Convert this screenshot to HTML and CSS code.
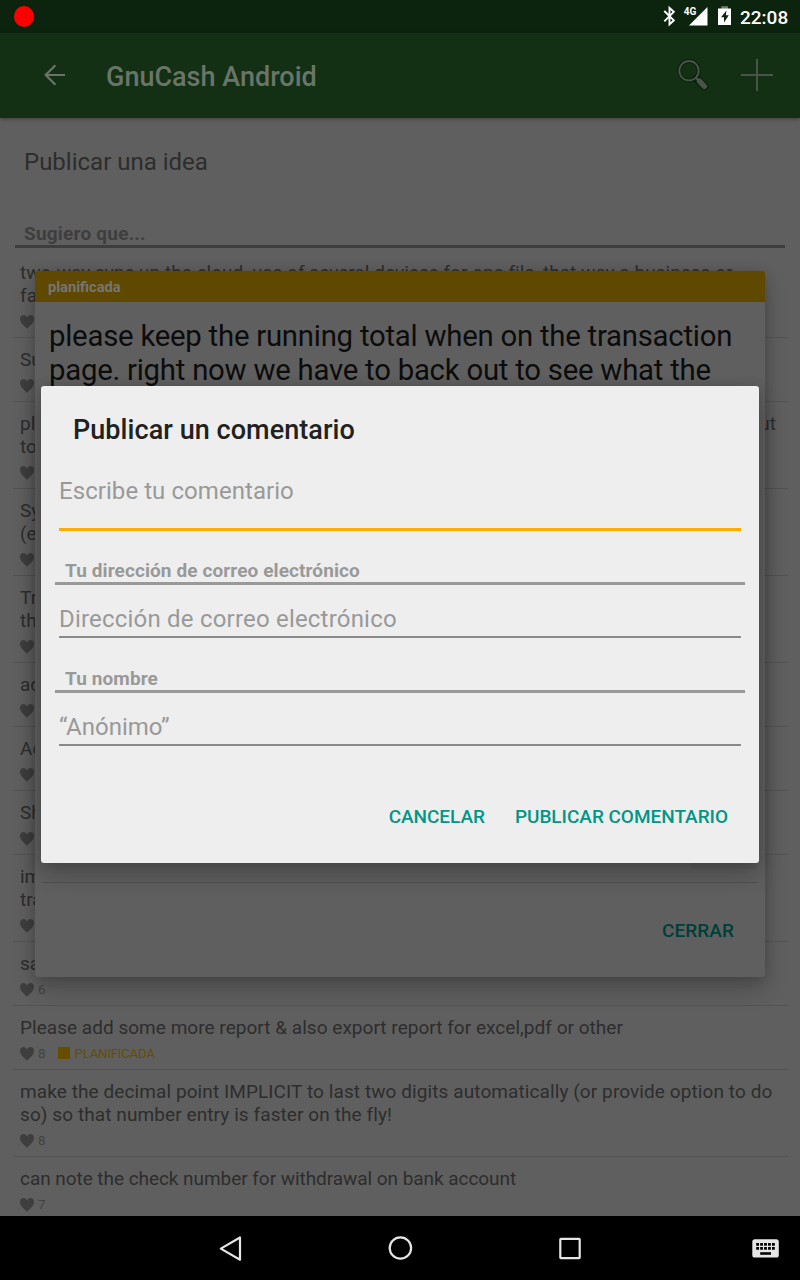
FILE: index.html
```html
<!DOCTYPE html>
<html lang="es">
<head>
<meta charset="utf-8">
<title>GnuCash Android</title>
<link rel="stylesheet" href="styles.css">
</head>
<body>
<svg class="defs" width="0" height="0"><symbol id="heart" viewBox="0 0 14 14"><path d="M7 13.7C4 11 0 7.800 0 4.100C0 1.700 1.500 .1 3.500 .1C5 .1 6.400 1.300 7 2.700C7.600 1.300 9 .1 10.500 .1C12.500 .1 14 1.700 14 4.100C14 7.800 10 11 7 13.700Z"/></symbol></svg>
<div class="screen">
  <header class="status">
    <span class="rec"></span>
    <svg class="status-icons" width="70" height="33" viewBox="662 0 70 33">
      <path d="M664.300 11L673.800 20.400L669.500 24.400V8L673.800 11.900L664.300 21.400" fill="none" stroke="#fff" stroke-width="1.900"/>
      <path d="M707.500 7V25.500H689Z" fill="#fff"/>
      <path d="M721.200 6.200H728V9H721.200Z" fill="#6d7c6e"/>
      <path d="M718 8.500H731V25H718Z" fill="#fff"/>
      <path d="M726.500 10.500L721 17.300H724V22.500L728.800 15.300H725.800Z" fill="#0c240e"/>
      <text x="683.800" y="15.300" class="net">4G</text>
    </svg>
    <span class="clock">22:08</span>
  </header>
  <div class="appbar">
    <svg class="back" width="24" height="24" viewBox="0 0 24 24"><path d="M22 12H3M12.400 2.300L2.700 12L12.400 21.700" fill="none" stroke="#6a756a" stroke-width="2.200"/></svg>
    <h1 class="app-title">GnuCash Android</h1>
    <svg class="search" width="32" height="32" viewBox="0 0 32 32"><path d="M19.300 19.300L27.200 27.200" stroke="#0a200c" stroke-width="8" stroke-linecap="round"/><circle cx="12" cy="11.700" r="9.700" fill="none" stroke="#0a200c" stroke-width="4"/><circle cx="12" cy="11.700" r="9.700" fill="none" stroke="#475548" stroke-width="1.900"/><path d="M18.500 18.300L22 22" stroke="#475548" stroke-width="2.400"/><path d="M22.500 22.200L27.300 27.300" stroke="#475548" stroke-width="5.400" stroke-linecap="round"/></svg>
    <svg class="plus" width="32" height="32" viewBox="0 0 32 32"><path d="M16 0V32M0 16H32" stroke="#475548" stroke-width="2"/></svg>
  </div>
  <main class="content">
    <div class="idea">Publicar una idea</div>
    <div class="section">Sugiero que...</div>
    <ul class="list">
      <li class="item"><p class="roomy">two-way sync up the cloud, use of several devices for one file, that way a business or<br>fa</p><div class="meta"><svg class="heart"><use href="#heart"/></svg></div></li>
      <li class="item"><p>Su</p><div class="meta"><svg class="heart"><use href="#heart"/></svg></div></li>
      <li class="item"><p class="split"><span>pl<br>to</span><span>but</span></p><div class="meta"><svg class="heart"><use href="#heart"/></svg></div></li>
      <li class="item"><p>Sy<br>(e</p><div class="meta"><svg class="heart"><use href="#heart"/></svg></div></li>
      <li class="item"><p>Tr<br>th</p><div class="meta"><svg class="heart"><use href="#heart"/></svg></div></li>
      <li class="item"><p>ad</p><div class="meta"><svg class="heart"><use href="#heart"/></svg></div></li>
      <li class="item"><p>Ad</p><div class="meta"><svg class="heart"><use href="#heart"/></svg></div></li>
      <li class="item"><p>Sh</p><div class="meta"><svg class="heart"><use href="#heart"/></svg></div></li>
      <li class="item"><p>im<br>tra</p><div class="meta"><svg class="heart"><use href="#heart"/></svg></div></li>
      <li class="item"><p>sa</p><div class="meta"><svg class="heart"><use href="#heart"/></svg><span>6</span></div></li>
      <li class="item"><p class="roomy">Please add some more report &amp; also export report for excel,pdf or other</p><div class="meta"><svg class="heart"><use href="#heart"/></svg><span>8</span><i class="swatch"></i><span class="tag">PLANIFICADA</span></div></li>
      <li class="item"><p class="roomier">make the decimal point IMPLICIT to last two digits automatically (or provide option to do<br>so) so that number entry is faster on the fly!</p><div class="meta"><svg class="heart"><use href="#heart"/></svg><span>8</span></div></li>
      <li class="item"><p class="tight">can note the check number for withdrawal on bank account</p><div class="meta"><svg class="heart"><use href="#heart"/></svg><span>7</span></div></li>
    </ul>
  </main>
  <nav class="nav">
    <svg width="800" height="64" viewBox="0 0 800 64" fill="none" stroke="#e6e6e6" stroke-width="2.200">
      <path d="M240 21.500V43.700L220.800 32.600Z" stroke-linejoin="round"/>
      <circle cx="400.400" cy="32" r="10.700"/>
      <rect x="560.300" y="22.800" width="19.400" height="19.400" rx=".6"/>
      <rect x="752.300" y="23.300" width="26.500" height="18.300" rx="2.600" fill="#e6e6e6" stroke="none"/>
      <path d="M756.200 28.400H775.200M756.200 32.400H775.200" stroke="#000" stroke-width="2.600" stroke-dasharray="2.800 1.150"/>
      <path d="M760.200 37.500H771" stroke="#000" stroke-width="2.600"/>
    </svg>
  </nav>

  <section class="detail">
    <div class="detail-status">planificada</div>
    <div class="detail-text">please keep the running total when on the transaction<br>page. right now we have to back out to see what the</div>
    <div class="button-edge"></div>
    <div class="detail-foot"><span class="cerrar">CERRAR</span></div>
  </section>

  <section class="dialog">
    <h2 class="dialog-title">Publicar un comentario</h2>
    <div class="field comment">Escribe tu comentario</div>
    <div class="label">Tu dirección de correo electrónico</div>
    <div class="field mail">Dirección de correo electrónico</div>
    <div class="label second">Tu nombre</div>
    <div class="field name">“Anónimo”</div>
    <div class="actions"><span class="cancel">CANCELAR</span><span class="publish">PUBLICAR COMENTARIO</span></div>
  </section>
</div>
</body>
</html>
```

FILE: styles.css
```css
* { box-sizing: border-box; margin: 0; padding: 0; }
body { font-family: Roboto, sans-serif; background: #5f5f5f; }
.defs { position: absolute; }
.screen {
  position: relative;
  width: 800px;
  height: 1280px;
  overflow: hidden;
  display: flex;
  flex-direction: column;
}
.status {
  height: 33px;
  background: #0c240e;
  display: flex;
  align-items: center;
  padding: 0 12px 0 14px;
  color: #fff;
  flex: none;
}
.rec { width: 20px; height: 21px; border-radius: 50%; background: #f00; }
.status-icons { margin-left: auto; }
.net { font-size: 10px; font-weight: 700; fill: #fff; }
.clock { font-size: 19px; font-weight: 500; line-height: 33px; width: 48px; margin-left: 8px; padding-top: 2px; white-space: nowrap; }
.appbar {
  height: 85px;
  flex: none;
  background: #133014;
  display: flex;
  align-items: center;
  padding: 0 27px 2px 43px;
  position: relative;
  box-shadow: 0 1px 4px rgba(0, 0, 0, .35);
}
.app-title { font-size: 27px; font-weight: 500; color: #6a756a; margin-left: 39px; line-height: 32px; padding-top: 5px; white-space: nowrap; }
.search { margin-left: auto; }
.plus { margin-left: 32px; }
.content { flex: 1; min-height: 0; overflow: hidden; background: #5f5f5f; }
.idea { height: 102px; padding: 29px 24px 0; font-size: 24px; line-height: 30px; color: #2d2d2d; }
.section {
  margin: 0 15px;
  height: 28px;
  padding-left: 9px;
  border-bottom: 3px solid #3e3e3e;
  font-size: 19px;
  font-weight: 700;
  line-height: 28px;
  letter-spacing: .22px;
  color: #3e3e3e;
}
.list { list-style: none; margin: 3px 12px 0 13px; }
.item { border-bottom: 1px solid #535353; padding: 10px 7px 8px; }
.item p { font-size: 19px; line-height: 23px; color: #2d2d2d; white-space: nowrap; }
.item .roomy { letter-spacing: .03px; }
.item .roomier { letter-spacing: .09px; }
.item .tight { letter-spacing: -.05px; }
.item .split { display: flex; justify-content: space-between; padding-right: 5px; }
.meta { margin-top: 8px; height: 14px; display: flex; align-items: center; font-size: 13.33px; line-height: 14px; color: #424242; }
.heart { width: 14px; height: 14px; fill: #3e3e3e; margin-right: 4px; }
.swatch { width: 12px; height: 12px; margin: 0 5px 2px 12px; background: #664e00; }
.tag { color: #664e00; letter-spacing: -.26px; }
.nav { height: 64px; flex: none; background: #000; position: relative; }
.nav svg { display: block; }

.detail {
  position: absolute;
  left: 35px;
  top: 271px;
  width: 730px;
  height: 706px;
  border-radius: 3px;
  overflow: hidden;
  background: #5f5f5f;
  display: flex;
  flex-direction: column;
  box-shadow: 0 12px 22px rgba(0, 0, 0, .22), 0 0 12px rgba(0, 0, 0, .13);
}
.detail-status { height: 31px; background: #5f4900; color: #757575; font-size: 14.67px; font-weight: 700; line-height: 32px; padding-left: 13px; }
.detail-text { padding: 17px 14px 0; font-size: 29.33px; line-height: 34px; letter-spacing: -.24px; color: #0c0c0c; white-space: nowrap; }
.button-edge { margin: auto 8px 13px auto; width: 66px; height: 6px; border-radius: 0 0 3px 3px; background: rgba(0, 0, 0, .04); }
.detail-foot { margin: 0 7px; height: 95px; border-top: 1px solid #505050; display: flex; justify-content: flex-end; padding: 36px 24px 0 0; }
.cerrar { font-size: 19px; font-weight: 500; line-height: 23px; letter-spacing: .08px; color: #003e38; }

.dialog {
  position: absolute;
  left: 41px;
  top: 386px;
  width: 718px;
  height: 477px;
  border-radius: 3px;
  background: #eee;
  padding: 27px 14px 0;
  box-shadow: 0 12px 22px rgba(0, 0, 0, .22), 0 0 12px rgba(0, 0, 0, .13);
}
.dialog-title { font-size: 27px; font-weight: 500; line-height: 34px; letter-spacing: .06px; color: #212121; padding-left: 18px; }
.field { margin: 0 4px; font-size: 24px; line-height: 30px; color: #999; border-bottom: 2px solid #8a8a8a; }
.comment { margin-top: 29px; height: 55px; letter-spacing: .06px; border-bottom: 3px solid #ffab00; }
.label { margin: 26px 0 0; height: 28px; padding-left: 10px; border-bottom: 3px solid #999; font-size: 19px; font-weight: 700; line-height: 28px; letter-spacing: .1px; color: #999; }
.mail, .name { height: 53px; padding-top: 19px; }
.mail { letter-spacing: .2px; }
.label.second { margin-top: 27px; }
.actions { margin-top: 59px; display: flex; justify-content: flex-end; gap: 30px; padding-right: 17px; font-size: 19px; font-weight: 500; line-height: 23px; color: #009688; }
.cancel { letter-spacing: -.05px; }
.publish { letter-spacing: -.03px; }
```
